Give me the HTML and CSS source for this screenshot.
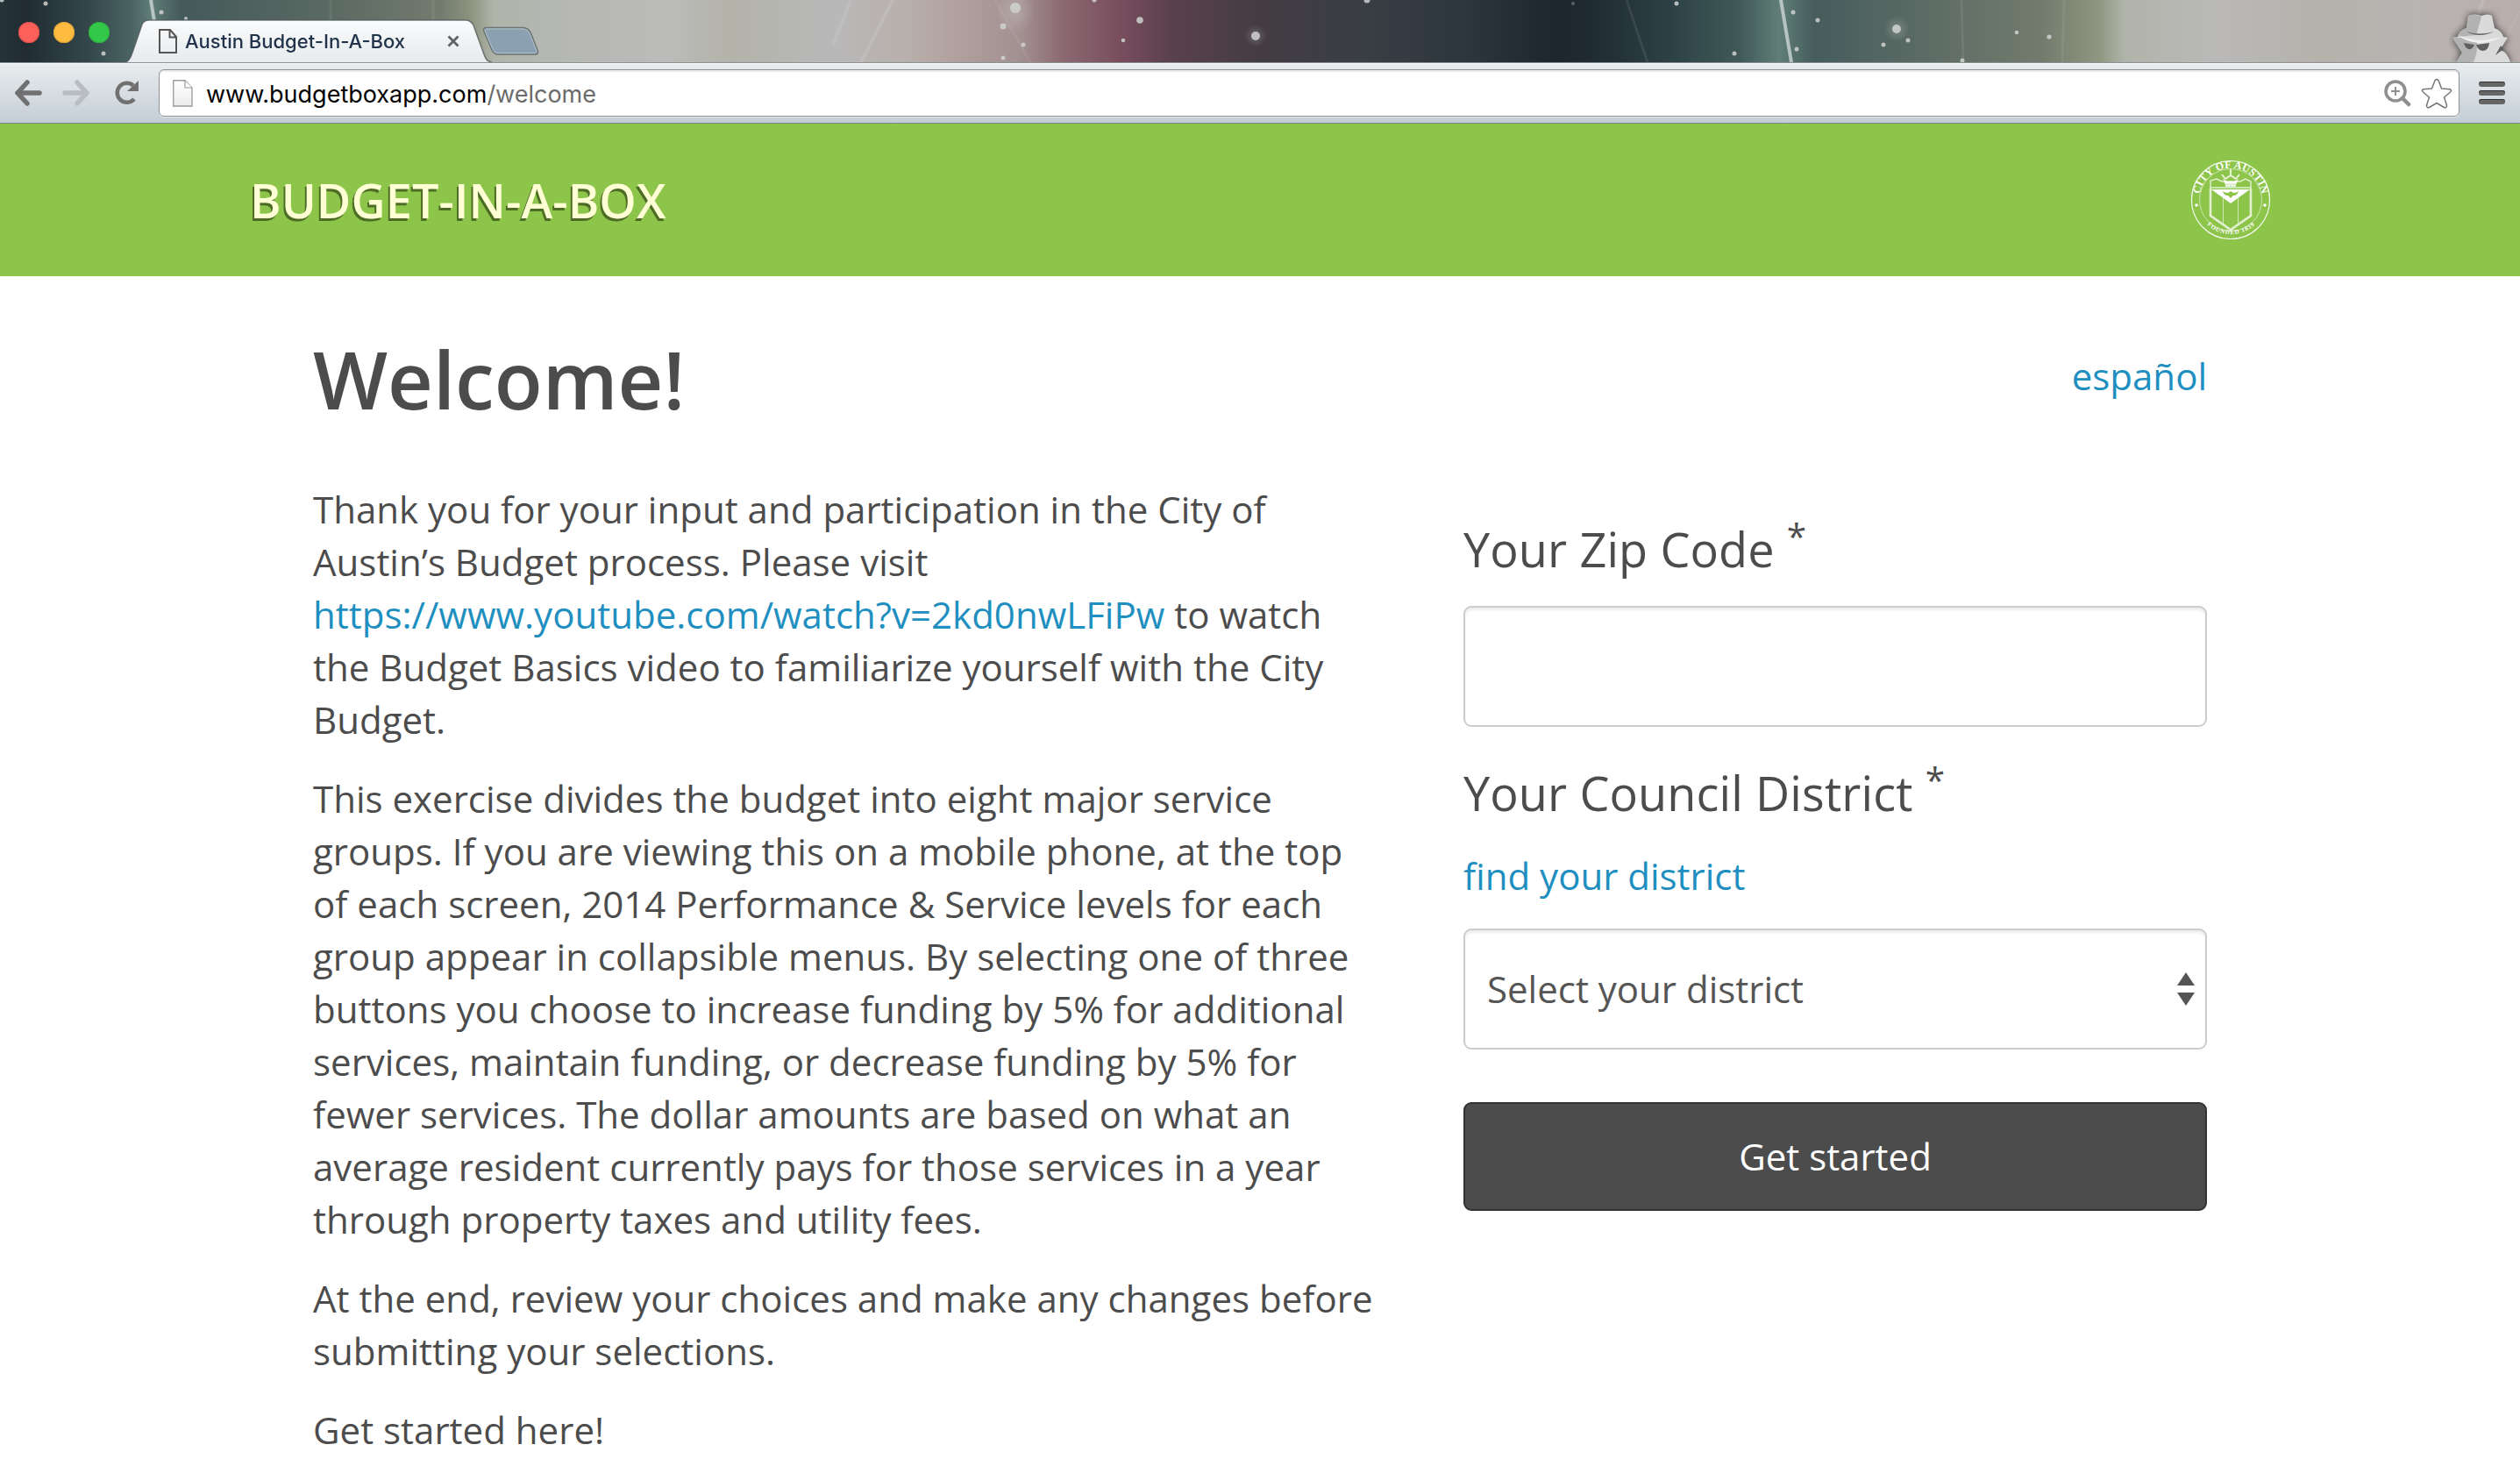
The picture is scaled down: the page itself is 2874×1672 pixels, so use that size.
FILE: index.html
```html
<!DOCTYPE html>
<html lang="en">
<head>
<meta charset="utf-8">
<title>Austin Budget-In-A-Box</title>
<link rel="stylesheet" href="styles.css">
</head>
<body>
<div class="tabstrip">
  <svg class="wallpaper" viewBox="0 0 2874 71" preserveAspectRatio="none">
    <defs>
      <linearGradient id="sky" gradientUnits="userSpaceOnUse" x1="0" y1="0" x2="2874" y2="0">
        <stop offset="0" stop-color="#263338"/><stop offset=".01" stop-color="#202c32"/><stop offset=".035" stop-color="#33474b"/><stop offset=".052" stop-color="#4b6362"/><stop offset=".06" stop-color="#607d77"/><stop offset=".072" stop-color="#445a5a"/><stop offset=".13" stop-color="#5a6963"/><stop offset=".175" stop-color="#737b6e"/><stop offset=".187" stop-color="#8d9480"/><stop offset=".196" stop-color="#b0b4a9"/><stop offset=".22" stop-color="#b5b7b3"/><stop offset=".265" stop-color="#bbbbb9"/><stop offset=".29" stop-color="#b3b3aa"/><stop offset=".33" stop-color="#b9b8b9"/><stop offset=".36" stop-color="#b8b0ac"/><stop offset=".38" stop-color="#b1a09d"/><stop offset=".405" stop-color="#a29091"/><stop offset=".422" stop-color="#8b6971"/><stop offset=".445" stop-color="#784d5d"/><stop offset=".465" stop-color="#59414c"/><stop offset=".5" stop-color="#443c43"/><stop offset=".54" stop-color="#3a3e45"/><stop offset=".58" stop-color="#2d373d"/><stop offset=".618" stop-color="#1d262d"/><stop offset=".63" stop-color="#1f2a31"/><stop offset=".66" stop-color="#2b3f44"/><stop offset=".69" stop-color="#405957"/><stop offset=".706" stop-color="#607e77"/><stop offset=".72" stop-color="#465d5c"/><stop offset=".76" stop-color="#5a6a64"/><stop offset=".81" stop-color="#727b6d"/><stop offset=".833" stop-color="#8f9680"/><stop offset=".843" stop-color="#b1b4aa"/><stop offset=".88" stop-color="#bab9b8"/><stop offset=".92" stop-color="#b5b2ac"/><stop offset=".96" stop-color="#b8b4b2"/><stop offset="1" stop-color="#b9aeac"/>
      </linearGradient>
      <radialGradient id="glow"><stop offset="0" stop-color="#fff" stop-opacity=".2"/><stop offset="1" stop-color="#fff" stop-opacity="0"/></radialGradient>
    </defs>
    <rect width="2874" height="71" fill="url(#sky)"/>
    <g stroke="#d5dcda" fill="none">
      <path d="M172 0l4 24M2031 0l12 71" stroke-width="4" opacity=".75"/>
      <path d="M970 0l-20 52M1018 0l-36 71M2832 0l-18 52" stroke-width="4" opacity=".22"/>
      <path d="M377 0v24M494 0v24M2237 0l2 71M2354 0l-2 71M1135 0l40 71M1855 0l24 71M2874 12l-30 59" stroke-width="3" opacity=".1"/>
    </g>
    <g fill="url(#glow)"><ellipse cx="1158" cy="12" rx="22" ry="28"/><circle cx="1432" cy="41" r="13"/><circle cx="2163" cy="33" r="15"/></g>
    <g fill="#d0d3d0" opacity=".85">
      <circle cx="1158" cy="9" r="6"/><circle cx="1144" cy="30" r="3.500"/><circle cx="1167" cy="51" r="2.500"/><circle cx="1144" cy="66" r="2.500"/><circle cx="1248" cy="0" r="2.500"/><circle cx="1300" cy="23" r="3.800"/><circle cx="1281" cy="46" r="2.300"/><circle cx="1432" cy="41" r="5"/><circle cx="1559" cy="0" r="3.500"/><circle cx="1794" cy="4" r="2" opacity=".4"/>
      <circle cx="52" cy="4" r="2.500"/><circle cx="118" cy="61" r="2.500"/><circle cx="184" cy="14" r="2.500"/><circle cx="2" cy="0" r="2.500"/><circle cx="212" cy="21" r="2"/>
      <circle cx="1912" cy="4" r="2.500"/><circle cx="1978" cy="61" r="2.500"/><circle cx="2045" cy="14" r="2.500"/><circle cx="2073" cy="23" r="2.500"/><circle cx="2049" cy="56" r="2.500"/><circle cx="2163" cy="33" r="5"/><circle cx="2176" cy="46" r="2.500"/><circle cx="2148" cy="51" r="2.500"/><circle cx="2238" cy="69" r="2.500"/><circle cx="2300" cy="37" r="2.300"/><circle cx="2337" cy="42" r="2.600"/>
    </g>
  </svg>
  <div class="lights"><i class="light red"></i><i class="light amber"></i><i class="light green"></i></div>
  <div class="tab">
    <svg class="tab-shape" viewBox="0 0 418 50">
      <defs><linearGradient id="tabfill" x1="0" y1="0" x2="0" y2="1"><stop offset="0" stop-color="#fafbfc"/><stop offset="1" stop-color="#e6eaed"/></linearGradient></defs>
      <path d="M0 49C4 48 6 44 8 38L19 6Q21 1 27 1H388Q394 1 397 7L409 40C411 46 413 48 418 49V50H0z" fill="url(#tabfill)"/>
      <path d="M0 49C4 48 6 44 8 38L19 6Q21 1 27 1H388Q394 1 397 7L409 40C411 46 413 48 418 49" fill="none" stroke="#4d5758" stroke-opacity=".75" stroke-width="1.500"/>
    </svg>
    <svg class="tab-doc" viewBox="0 0 21 28"><path d="M1 1H13L20 9V27H1zM12.500 1V9.500H20" fill="none" stroke="#555" stroke-width="2"/></svg>
    <span class="tab-title">Austin Budget-In-A-Box</span>
    <svg class="tab-close" viewBox="0 0 14 14"><path d="M1.500 1.500L12.500 12.500M12.500 1.500L1.500 12.500" stroke="#5f6264" stroke-width="2.800"/></svg>
  </div>
  <svg class="newtab" viewBox="0 0 66 34"><path d="M5 1.500H46Q53 1.500 55.500 8L63 27Q65 32 60 32H18Q13 32 11 27L2 6Q0 1.500 5 1.500z" fill="#8ba0b0" stroke="#6c7573" stroke-width="1.500"/><path d="M6 3H46Q52 3 54 8.500L61.500 27Q63 30.500 59 30.500H18Q14 30.500 12.500 27L3.500 6Q2.500 3 6 3z" fill="none" stroke="#b3c2cd" stroke-width="1"/></svg>
  <svg class="incognito" viewBox="0 0 80 61">
    <path class="spy-shadow" d="M22 8Q29 5 37 8Q45 5 49 8L52 22Q60 25 62 32L67 33L58 47L63 49Q69 55 70 62H8L15 50L4 33L10 32Q11 25 20 22z" fill="#dadada"/>
    <path d="M22 8Q29 5 37 9Q34 20 31 30L10 32Q11 25 20 22zM4 33L14 33Q24 38 32 37Q33 52 27 62H8L15 50z" fill="#b2b2b2"/>
    <path d="M10 30Q35 41 62 31Q48 39 34 39Q20 38 10 30z" fill="#f0f0f0"/>
    <path d="M20 26Q35 34 51 26Q35 31 20 26zM17 39L29 41Q27 47 22 46Q18 44 17 39zM31 41L46 39Q45 48 38 48Q33 47 31 41zM62 46L53 53L59 42z" fill="#606060"/>
  </svg>
</div>
<div class="toolbar">
  <svg class="nav back" viewBox="0 0 32 30"><path d="M15 3L4 15L15 27M4 15H29" /></svg>
  <svg class="nav forward" viewBox="0 0 32 30"><path d="M17 3L28 15L17 27M28 15H3" /></svg>
  <svg class="reload" viewBox="0 0 30 30"><path d="M23 22A11 11 0 1 1 22 6.500" fill="none" stroke="#707070" stroke-width="4.500"/><path d="M28 1V13H15z" fill="#707070"/></svg>
  <div class="omnibox">
    <svg class="page-doc" viewBox="0 0 23 31"><defs><linearGradient id="paper" x1="0" y1="0" x2="0" y2="1"><stop offset="0" stop-color="#fff"/><stop offset="1" stop-color="#ececec"/></linearGradient></defs><path d="M.75 .75H14L22 9V30H.75z" fill="url(#paper)" stroke="#999" stroke-width="1.300"/><path d="M14 1V9H22" fill="#fff" stroke="#999" stroke-width="1.200"/></svg>
    <span class="url">www.budgetboxapp.com<span class="path">/welcome</span></span>
    <svg class="magnifier" viewBox="0 0 31 31"><circle cx="13" cy="13" r="11" fill="none" stroke="#8f8f8f" stroke-width="3.600"/><path d="M13 8V18M8 13H18" stroke="#8f8f8f" stroke-width="2"/><path d="M21 21L28 28" stroke="#8f8f8f" stroke-width="4.500" stroke-linecap="round"/></svg>
    <svg class="star" viewBox="0 0 36 35"><path d="M18 1.500Q19.800 1.500 20.500 4L23.500 12L33 12.700Q36 14 33.500 16L26.500 22L29.500 31Q29.500 34.500 26.500 33.500L18 28.500L9.500 33.500Q6.500 34.500 6.500 31L9.500 22L2.500 16Q0 14 3 12.700L12.500 12L15.500 4Q16.200 1.500 18 1.500z" fill="#fff" stroke="#777" stroke-width="1.500" stroke-linejoin="round"/></svg>
  </div>
  <div class="menu"><i></i><i></i><i></i></div>
</div>
<header class="banner">
  <span class="brand">BUDGET-IN-A-BOX</span>
  <svg class="seal" viewBox="0 0 92 92">
    <defs><path id="arcTop" d="M10.500 50A35.800 35.800 0 1 1 81.500 50"/><path id="arcLow" d="M13 67A40 40 0 0 0 80 67"/></defs>
    <g fill="none" stroke="#fff">
      <circle cx="46" cy="46" r="44.500" stroke-width="1.200" opacity=".9"/><circle cx="46" cy="46" r="35.500" stroke-width="1" opacity=".55"/>
      <path d="M23 33V64L46 80L69 64V33" stroke-width="2.600" opacity=".75"/><path d="M37.500 37V73M54.500 37V73" stroke-width="1" opacity=".6"/>
      <path d="M22 32H70M23 31V24L30 22L36 25H57L63 22L69 25V31" stroke-width="1.400" opacity=".75"/><path d="M46 11V17M36 17L40 22L46 18L52 22L56 17M39 26H53M40 30H52" stroke-width="2" opacity=".8"/>
    </g>
    <path d="M24 34H68L46 50z" fill="#fff"/><path d="M37 22L40 29H52L55 22L49 25H43z" fill="#fff" opacity=".75"/><path d="M37 36Q42 40 46 36Q50 40 55 36Q54 41 49 41L46 44L43 41Q38 41 37 36z" fill="#8dc44a"/>
    <circle cx="7" cy="52" r="1.800" fill="#fff"/><circle cx="85" cy="52" r="1.800" fill="#fff"/>
    <text class="seal-top"><textPath href="#arcTop" startOffset="50%" text-anchor="middle">CITY OF AUSTIN</textPath></text>
    <text class="seal-low"><textPath href="#arcLow" startOffset="50%" text-anchor="middle">FOUNDED 1839</textPath></text>
  </svg>
</header>
<main class="content">
  <div class="heading"><h1>Welcome!</h1><a class="lang">español</a></div>
  <div class="columns">
    <section class="intro">
      <p>Thank you for your input and participation in the City of Austin’s Budget process. Please visit <a>https://www.youtube.com/watch?v=2kd0nwLFiPw</a> to watch the Budget Basics video to familiarize yourself with the City Budget.</p>
      <p>This exercise divides the budget into eight major service groups. If you are viewing this on a mobile phone, at the top of each screen, 2014 Performance &amp; Service levels for each group appear in collapsible menus. By selecting one of three buttons you choose to increase funding by 5% for additional services, maintain funding, or decrease funding by 5% for fewer services. The dollar amounts are based on what an average resident currently pays for those services in a year through property taxes and utility fees.</p>
      <p>At the end, review your choices and make any changes before submitting your selections.</p>
      <p>Get started here!</p>
    </section>
    <form class="form">
      <label class="label" for="zip">Your Zip Code <sup>*</sup></label>
      <input class="field" id="zip" type="text">
      <label class="label second">Your Council District <sup>*</sup></label>
      <a class="find">find your district</a>
      <div class="field select"><span>Select your district</span>
        <svg class="arrows" viewBox="0 0 20 38"><path d="M0 15L10 0L20 15zM0 23H20L10 38z" fill="#555"/></svg>
      </div>
      <button class="start" type="button">Get started</button>
    </form>
  </div>
</main>
</body>
</html>
```
FILE: styles.css
```css
* { box-sizing: border-box; }
html, body { height: 1672px; overflow: hidden; }
body { margin: 0; background: #fff; color: #4c4c4c; font: 42px/60px "Open Sans", sans-serif; }
svg { display: block; flex: none; }
a { color: #1e8fc0; text-decoration: none; }

/* browser tab strip */
.tabstrip { position: relative; height: 71px; display: flex; align-items: flex-start; overflow: hidden; }
.wallpaper { position: absolute; left: 0; top: 0; width: 100%; height: 71px; }
.lights { position: relative; display: flex; gap: 16px; padding: 25px 0 0 21px; width: 143px; flex: none; }
.light { width: 24px; height: 24px; border-radius: 50%; flex: none; }
.red { background: #fc605b; box-shadow: inset 0 0 0 1px #df4f4a; }
.amber { background: #fdbc40; box-shadow: inset 0 0 0 1px #dfa136; }
.green { background: #34c84a; box-shadow: inset 0 0 0 1px #2aae3c; }
.tab { position: relative; width: 418px; height: 50px; margin-top: 22px; padding-left: 38px; display: flex; align-items: center; flex: none; }
.tab-shape { position: absolute; left: 0; top: 0; width: 418px; height: 50px; }
.tab-doc { position: relative; width: 21px; height: 28px; }
.tab-title { position: relative; margin-left: 9px; width: 299px; font: 450 22px/30px Inter, sans-serif; letter-spacing: 0; color: #22344b; white-space: nowrap; }
.tab-close { position: relative; width: 14px; height: 14px; }
.newtab { position: relative; width: 66px; height: 34px; margin: 30px 0 0 -11px; }
.incognito { position: relative; width: 80px; height: 61px; margin: 10px 1px 0 auto; }
.spy-shadow { filter: drop-shadow(0 0 4px #333); }

/* navigation toolbar */
.toolbar { height: 70px; display: flex; align-items: center; background: linear-gradient(#e8ecee, #c5ced6); border-top: 1px solid #8d9294; border-bottom: 1px solid #7b8389; box-shadow: inset 0 1px #f8f9fa; }
.nav { width: 32px; height: 30px; fill: none; stroke-width: 5.5; stroke-linecap: round; stroke-linejoin: round; }
.back { margin-left: 16px; stroke: #707070; }
.forward { margin-left: 23px; stroke: #b9bdc1; }
.reload { width: 30px; height: 30px; margin-left: 27px; }
.omnibox { width: 2624px; height: 54px; margin-left: 21px; padding: 0 7px 0 15px; display: flex; align-items: center; flex: none; background: #fff; border: 1px solid #8b9196; border-radius: 6px; box-shadow: inset 0 2px #ececec, 0 1px #e6eaed; }
.page-doc { width: 23px; height: 31px; }
.url { margin: 3px auto 0 15px; font: 27px/36px Inter, sans-serif; color: #000; white-space: nowrap; }
.path { color: #6b6b6b; }
.magnifier { width: 31px; height: 31px; }
.star { width: 36px; height: 35px; margin-left: 11px; }
.menu { display: flex; flex-direction: column; gap: 4px; margin-left: 22px; }
.menu i { width: 30px; height: 6px; border-radius: 3px; background: #666; box-shadow: inset 0 1px #333; }

/* site banner */
.banner { height: 174px; padding: 0 284px 0 285px; display: flex; align-items: center; justify-content: space-between; background: #8dc44a; }
.brand { font-size: 54px; font-weight: 600; line-height: 74px; letter-spacing: .08px; color: #ffffd6; text-shadow: -2px 3px 0 #4c6b24; }
.seal { width: 92px; height: 92px; overflow: visible; }
.seal-top { font: bold 12px "Liberation Serif", serif; letter-spacing: .3px; fill: #fff; }
.seal-low { font: bold 7px "Liberation Serif", serif; letter-spacing: .8px; fill: #fff; }

/* page content */
.content { padding: 0 357px; }
.heading { display: flex; justify-content: space-between; height: 236px; padding-top: 84px; }
h1 { margin: -16px 0 0; font-size: 90px; line-height: 99px; font-weight: 600; }
.columns { display: flex; gap: 90px; }
.intro { width: 1222px; flex: none; letter-spacing: .015px; }
p { margin: 0 0 30px; }
.form { width: 848px; display: flex; flex-direction: column; }
.label { display: block; height: 77px; margin: 37px 0 26px; font-size: 54px; line-height: 77px; letter-spacing: .1px; white-space: nowrap; }
.label sup { font-size: 40.5px; line-height: 0; position: relative; top: -.5em; vertical-align: baseline; }
.label.second { margin: 37px 0 26px; }
.field { width: 100%; height: 138px; border: 2px solid #ccc; border-radius: 9px; background: #fff; box-shadow: inset 0 3px 3px rgba(0,0,0,.075); }
.find { margin-bottom: 30px; }
.select { display: flex; align-items: center; justify-content: space-between; padding: 0 12px 0 25px; color: #555; }
.arrows { width: 20px; height: 38px; }
.start { height: 124px; margin-top: 60px; padding: 0; border: 2px solid #333; border-radius: 9px; background: #4c4c4c; color: #fff; font: 42px/60px "Open Sans", sans-serif; }
```
